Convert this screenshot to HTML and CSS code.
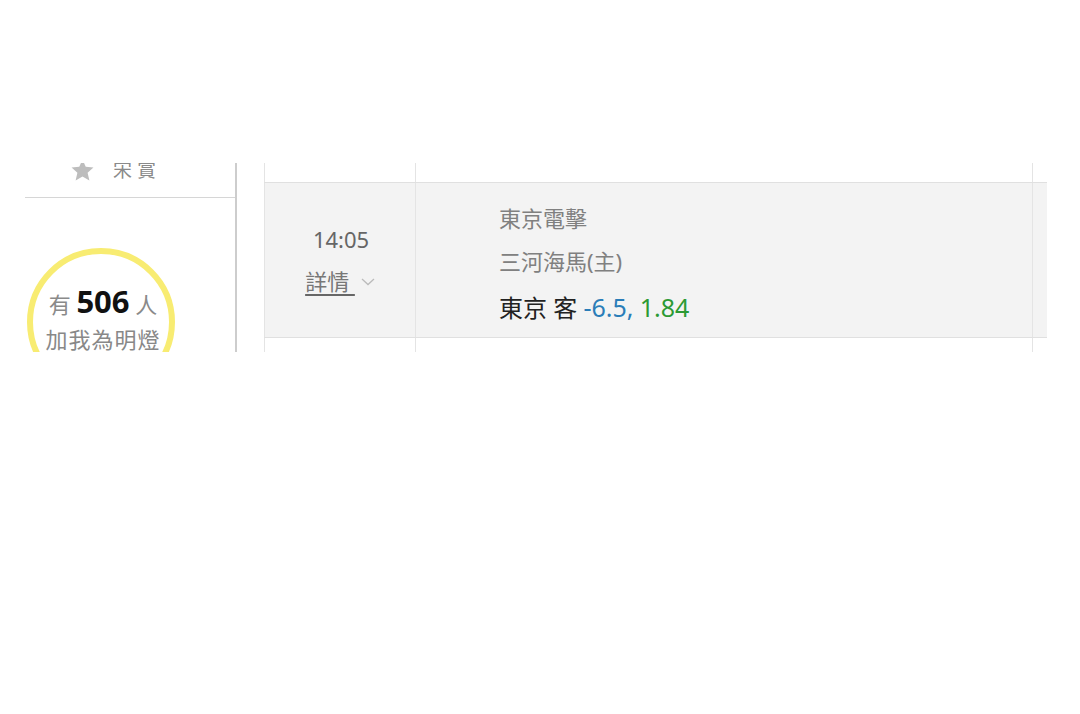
FILE: index.html
```html
<!DOCTYPE html>
<html lang="zh-Hant">
<head>
<meta charset="utf-8">
<title>賽事</title>
<link rel="stylesheet" href="styles.css">
</head>
<body>
<div class="page">
  <div class="frame">
    <aside class="sidebar">
      <div class="side-item">
        <svg class="star" viewBox="0 0 24 24" width="25" height="25"><path d="M12 1.5l3.1 6.9 7.4.7-5.6 5 1.7 7.4L12 17.7l-6.6 3.8 1.7-7.4-5.6-5 7.4-.7z" fill="#bdbdbd"/></svg>
        <span class="side-label">宋賞</span>
      </div>
      <div class="lamp">
        <div class="lamp-line1"><span class="soft">有</span> <b class="count">506</b> <span class="soft">人</span></div>
        <div class="lamp-line2">加我為明燈</div>
      </div>
    </aside>
    <section class="board">
      <div class="row row-prev">
        <div class="cell cell-time"></div>
        <div class="cell cell-main"></div>
        <div class="cell cell-end"></div>
      </div>
      <div class="row row-game">
        <div class="cell cell-time">
          <div class="time">14:05</div>
          <div class="detail"><a class="detail-link">詳情&nbsp;</a><svg class="chev" viewBox="0 0 14 8" width="14" height="8"><path d="M1 1l6 5.5L13 1" fill="none" stroke="#bbbbbb" stroke-width="1.3"/></svg></div>
        </div>
        <div class="cell cell-main">
          <div class="league">東京電擊</div>
          <div class="pitcher">三河海馬(主)</div>
          <div class="pick">東京 客 <span class="spread">-6.5,</span> <span class="odds">1.84</span></div>
        </div>
        <div class="cell cell-end"></div>
      </div>
      <div class="row row-next">
        <div class="cell cell-time"></div>
        <div class="cell cell-main"></div>
        <div class="cell cell-end"></div>
      </div>
    </section>
  </div>
</div>
</body>
</html>
```
FILE: styles.css
```css
* { box-sizing: border-box; }
html, body { margin: 0; padding: 0; background: #ffffff; }
body {
  font-family: "Noto Sans", "Noto Sans CJK TC", sans-serif;
  color: #333;
}
.page { padding-top: 163px; }
.frame {
  height: 189px;
  overflow: hidden;
  display: flex;
  padding-left: 25px;
}
.sidebar {
  width: 212px;
  flex: none;
  border-right: 2px solid #cdcdcd;
}
.side-item {
  margin-top: -16px;
  height: 51px;
  border-bottom: 1px solid #d6d6d6;
  display: flex;
  align-items: center;
  padding-left: 45px;
  padding-bottom: 4px;
}
.star { display: block; flex: none; }
.side-label {
  margin-left: 18px;
  font-size: 19px;
  letter-spacing: 5px;
  color: #8a8a8a;
  line-height: 24px;
}
.lamp {
  margin-top: 50px;
  margin-left: 2px;
  width: 148px;
  height: 148px;
  border: 6px solid #f8ec72;
  border-radius: 50%;
  display: flex;
  flex-direction: column;
  align-items: center;
  padding-top: 27px;
}
.lamp-line1 {
  font-size: 22px;
  line-height: 40px;
  color: #888;
  white-space: nowrap;
  margin-left: 4px;
}
.soft { color: #8a8a8a; }
.count {
  font-size: 31px;
  font-weight: 700;
  color: #111;
}
.lamp-line2 {
  font-size: 22px;
  line-height: 30px;
  letter-spacing: 1px;
  color: #888;
  white-space: nowrap;
  margin-left: 4px;
}
.board {
  margin-left: 27px;
  width: 783px;
  flex: none;
}
.row {
  display: grid;
  grid-template-columns: 151px 617px 15px;
  border-top: 1px solid #e0e0e0;
}
.row-prev { margin-top: -22px; height: 41px; border-top: none; }
.row-game { height: 155px; background: #f3f3f3; }
.row-next { height: 40px; }
.cell { border-left: 1px solid #e4e4e4; }
.cell-time {
  display: flex;
  flex-direction: column;
  align-items: center;
  justify-content: center;
  padding-left: 2px;
}
.time {
  font-size: 22px;
  line-height: 42px;
  color: #666;
}
.detail {
  display: flex;
  align-items: center;
  line-height: 42px;
  padding-right: 2px;
}
.detail-link {
  font-size: 22px;
  color: #777;
  text-decoration: underline;
  text-decoration-color: #666;
  text-underline-offset: 4px;
}
.chev { display: block; margin-left: 6px; margin-top: 2px; }
.cell-main {
  padding-left: 83px;
  padding-top: 14px;
}
.league, .pitcher {
  font-size: 22px;
  line-height: 43px;
  color: #808080;
  white-space: nowrap;
}
.pick {
  font-size: 24px;
  line-height: 48px;
  color: #222;
  white-space: nowrap;
}
.spread, .odds { font-size: 25px; }
.spread { color: #2a7db8; }
.odds { color: #2c9a33; }
```
